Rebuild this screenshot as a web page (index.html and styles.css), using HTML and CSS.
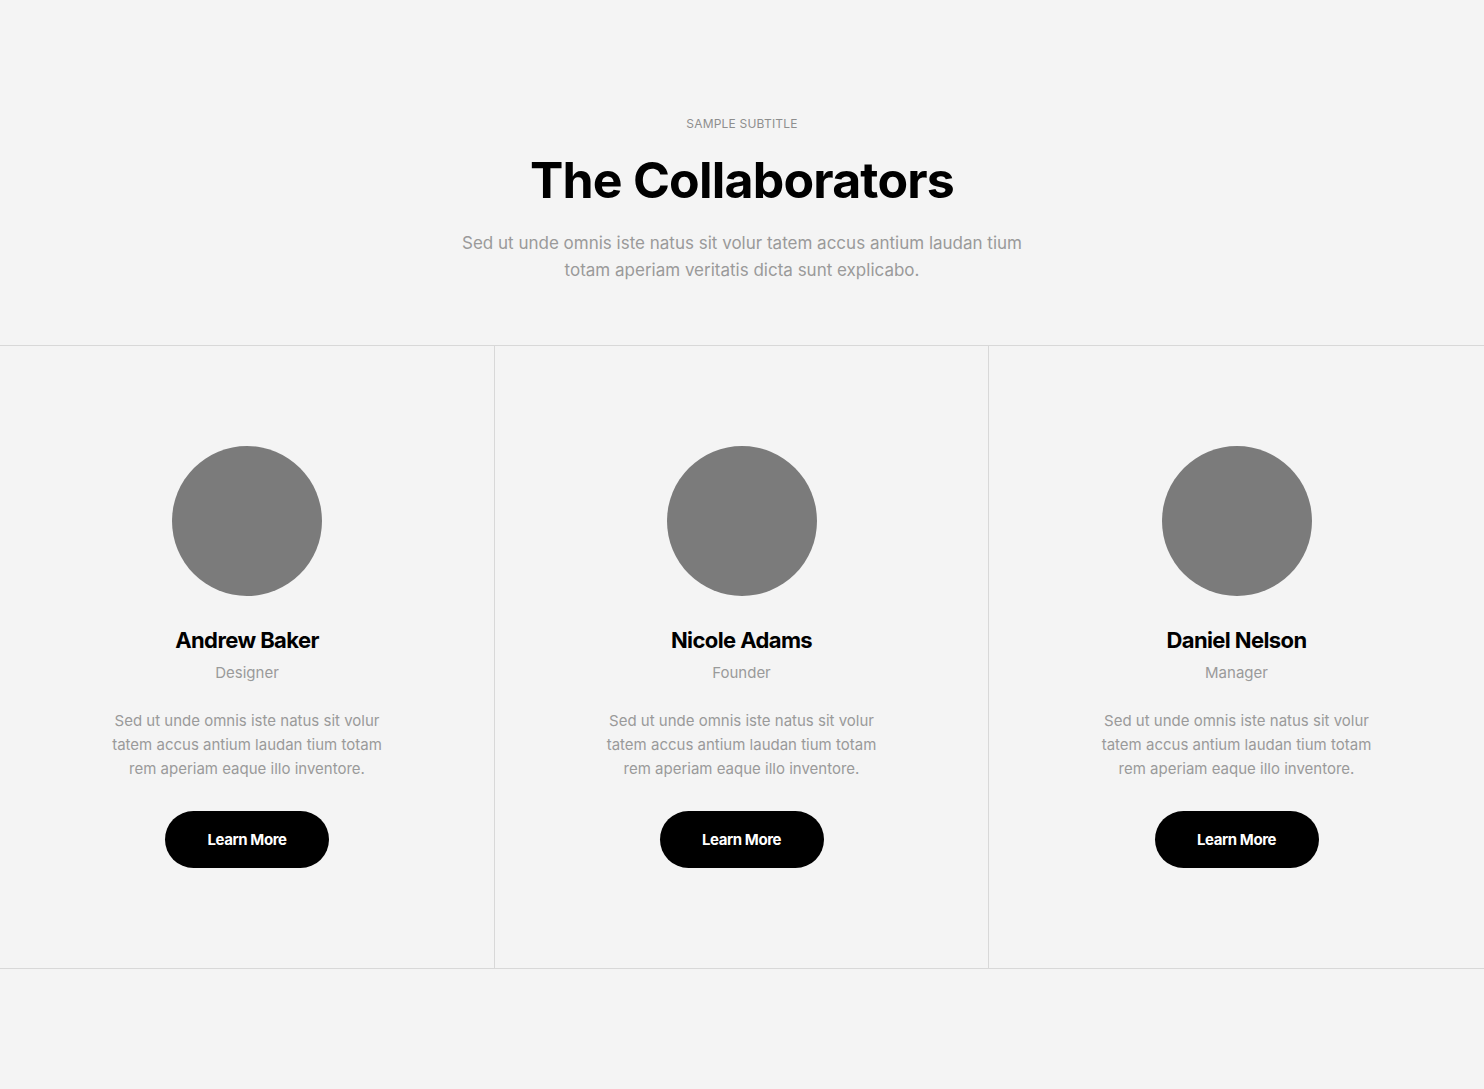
FILE: index.html
```html
<!DOCTYPE html>
<html lang="en">
<head>
<meta charset="utf-8">
<title>The Collaborators</title>
<link rel="stylesheet" href="styles.css">
</head>
<body>
<section class="team">
  <header class="intro">
    <p class="subtitle">SAMPLE SUBTITLE</p>
    <h1 class="title">The Collaborators</h1>
    <p class="lead">Sed ut unde omnis iste natus sit volur tatem accus antium laudan tium totam aperiam veritatis dicta sunt explicabo.</p>
  </header>
  <div class="grid">
    <article class="card">
      <div class="avatar"></div>
      <h2 class="name">Andrew Baker</h2>
      <p class="role">Designer</p>
      <p class="desc">Sed ut unde omnis iste natus sit volur tatem accus antium laudan tium totam rem aperiam eaque illo inventore.</p>
      <a class="btn" href="#">Learn More</a>
    </article>
    <article class="card">
      <div class="avatar"></div>
      <h2 class="name">Nicole Adams</h2>
      <p class="role">Founder</p>
      <p class="desc">Sed ut unde omnis iste natus sit volur tatem accus antium laudan tium totam rem aperiam eaque illo inventore.</p>
      <a class="btn" href="#">Learn More</a>
    </article>
    <article class="card">
      <div class="avatar"></div>
      <h2 class="name">Daniel Nelson</h2>
      <p class="role">Manager</p>
      <p class="desc">Sed ut unde omnis iste natus sit volur tatem accus antium laudan tium totam rem aperiam eaque illo inventore.</p>
      <a class="btn" href="#">Learn More</a>
    </article>
  </div>
</section>
</body>
</html>
```
FILE: styles.css
```css
html, body {
  margin: 0;
  padding: 0;
  background: #f4f4f4;
  font-family: Inter, "Noto Sans", sans-serif;
  color: #000;
}
.team {
  padding-top: 116px;
  padding-bottom: 120px;
}
.intro {
  text-align: center;
  padding-bottom: 61px;
  border-bottom: 1px solid #d8d8d8;
}
.subtitle {
  margin: 0;
  font-size: 12px;
  line-height: 16px;
  color: #8e8e8e;
  letter-spacing: 0.2px;
}
.title {
  margin: 18px 0 0;
  font-size: 50px;
  line-height: 60px;
  font-weight: 700;
  letter-spacing: -0.8px;
}
.lead {
  margin: 20px auto 0;
  max-width: 566px;
  font-size: 17px;
  line-height: 27px;
  color: #9a9a9a;
  letter-spacing: 0;
}
.grid {
  display: grid;
  grid-template-columns: 494px 494px 1fr;
  border-bottom: 1px solid #d8d8d8;
}
.card {
  display: flex;
  flex-direction: column;
  align-items: center;
  text-align: center;
  padding: 100px 0 100px;
  border-left: 1px solid #d8d8d8;
}
.card:first-child {
  border-left: none;
}
.avatar {
  width: 150px;
  height: 150px;
  border-radius: 50%;
  background: #7b7b7b;
}
.name {
  margin: 30px 0 0;
  font-size: 22px;
  line-height: 28px;
  font-weight: 700;
  letter-spacing: -0.6px;
}
.role {
  margin: 9px 0 0;
  font-size: 15px;
  line-height: 20px;
  color: #9a9a9a;
  letter-spacing: 0;
}
.desc {
  margin: 26px 0 0;
  max-width: 290px;
  font-size: 15px;
  line-height: 24px;
  color: #9a9a9a;
  letter-spacing: 0;
}
.btn {
  margin-top: 30px;
  display: flex;
  align-items: center;
  justify-content: center;
  width: 164px;
  height: 57px;
  border-radius: 29px;
  background: #000;
  color: #fff;
  text-decoration: none;
  font-size: 15px;
  font-weight: 700;
  letter-spacing: -0.4px;
}
```
